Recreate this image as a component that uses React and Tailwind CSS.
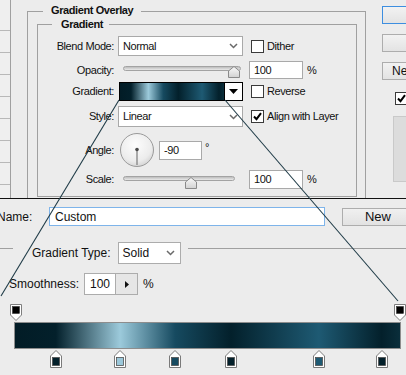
import React from "react";

const GRAD =
  "bg-[linear-gradient(90deg,#021c26_0%,#03202b_10.6%,#9ccadb_27.3%,#164a60_41.6%,#03202b_56.1%,#1e5a73_78.9%,#03202b_95.2%,#0a2e3b_100%)]";

function Check({ checked }) {
  return (
    <div className="w-[13px] h-[13px] shrink-0 border border-[#3a3a3a] bg-white flex items-center justify-center">
      {checked && (
        <svg width="9" height="9" viewBox="0 0 9 9">
          <path d="M1 4.5 L3.5 7.2 L8 1.2" stroke="#000" strokeWidth="2" fill="none" />
        </svg>
      )}
    </div>
  );
}

function Chevron() {
  return (
    <svg width="9" height="6" viewBox="0 0 9 6">
      <path d="M1 1 L4.5 4.5 L8 1" stroke="#6a6a6a" strokeWidth="1.5" fill="none" />
    </svg>
  );
}

function Thumb() {
  return (
    <svg width="12" height="12" viewBox="0 0 12 12">
      <defs>
        <linearGradient id="tg" x1="0" y1="0" x2="0" y2="1">
          <stop offset="0" stopColor="#fafafa" />
          <stop offset="1" stopColor="#d2d2d2" />
        </linearGradient>
      </defs>
      <path d="M6 0.5 L11.5 5 V11.5 H0.5 V5 Z" fill="url(#tg)" stroke="#8a8a8a" />
    </svg>
  );
}

function OpacityStop() {
  return (
    <svg width="12" height="17" viewBox="0 0 12 17">
      <path d="M0.5 0.5 H11.5 V11 L6 16.5 L0.5 11 Z" fill="#fff" stroke="#7e7e7e" />
      <rect x="2.5" y="2.5" width="7" height="7" fill="#000" stroke="#222" strokeWidth="0.5" />
    </svg>
  );
}

function ColorStop({ color }) {
  return (
    <svg width="12" height="18" viewBox="0 0 12 18">
      <path d="M6 0.5 L11.5 6 V17.5 H0.5 V6 Z" fill="#fff" stroke="#7a7a7a" />
      <rect x="2.5" y="7.5" width="7" height="8" fill={color} stroke="#505050" strokeWidth="0.8" />
    </svg>
  );
}

export default function App() {
  const stops = [
    { x: 50, c: "#03202b" },
    { x: 114, c: "#9cc8da" },
    { x: 169, c: "#164a60" },
    { x: 225, c: "#03202b" },
    { x: 313, c: "#1e5a73" },
    { x: 376, c: "#03202b" },
  ];
  return (
    <div className="relative w-[406px] h-[375px] overflow-hidden bg-[#ececec] text-[#111] font-['Liberation_Sans',Arial,sans-serif]">
      {/* Top: Layer Style dialog */}
      <div className="h-[198px] flex overflow-hidden text-[11px] tracking-[-0.4px]">
        <div className="w-[11px] shrink-0 border-r border-[#a0a0a0] bg-[#efefef] flex flex-col">
          <div className="h-[31px] shrink-0 border-b border-[#b8b8b8]" />
          <div className="h-[22px] shrink-0 border-b border-[#b8b8b8]" />
          <div className="h-[22px] shrink-0 border-b border-[#b8b8b8]" />
          <div className="h-[22px] shrink-0 border-b border-[#b8b8b8]" />
          <div className="h-[22px] shrink-0 border-b border-[#b8b8b8]" />
          <div className="h-[22px] shrink-0 border-b border-[#b8b8b8]" />
          <div className="h-[22px] shrink-0 border-b border-[#b8b8b8]" />
          <div className="h-[22px] shrink-0 border-b border-[#b8b8b8]" />
        </div>

        <div className="ml-[16px] mt-[11px] w-[339px] h-[200px] shrink-0 border border-[#a0a0a0] flex flex-col">
          <div className="-mt-[8px] ml-[15px] self-start px-[8px] bg-[#ececec] font-bold leading-[13px]">
            Gradient Overlay
          </div>
          <div className="ml-[9px] mt-[7px] w-[320px] h-[173px] shrink-0 border border-[#a0a0a0] flex flex-col">
            <div className="-mt-[7px] ml-[14px] self-start pl-[9px] pr-[6px] bg-[#ececec] font-bold leading-[13px]">
              Gradient
            </div>

            {/* Blend Mode */}
            <div className="mt-[5px] h-[20px] flex items-center">
              <div className="w-[76px] shrink-0 text-right">Blend Mode:</div>
              <div className="ml-[4px] w-[125px] h-[20px] shrink-0 bg-white border border-[#a9a9a9] flex items-center justify-between pl-[4px] pr-[4px]">
                <span>Normal</span>
                <Chevron />
              </div>
              <div className="ml-[8px]"><Check /></div>
              <span className="ml-[3px]">Dither</span>
            </div>

            {/* Opacity */}
            <div className="mt-[5px] h-[18px] flex items-center">
              <div className="w-[76px] shrink-0 text-right">Opacity:</div>
              <div className="relative ml-[4px] w-[124px] h-[18px] shrink-0">
                <div className="mt-[5px] ml-[5px] w-[118px] h-[5px] rounded-full border border-[#a3a3a3] bg-[linear-gradient(180deg,#bdbdbd,#e9e9e9)]" />
                <div className="absolute left-[110px] top-[5px]"><Thumb /></div>
              </div>
              <div className="ml-[7px] w-[54px] h-[18px] shrink-0 bg-white border border-[#a9a9a9] flex items-center pl-[4px]">100</div>
              <span className="ml-[4px]">%</span>
            </div>

            {/* Gradient */}
            <div className="mt-[3px] h-[19px] flex items-center">
              <div className="w-[76px] shrink-0 text-right">Gradient:</div>
              <div className="ml-[5px] w-[124px] h-[19px] shrink-0 border border-black flex">
                <div className={"w-[104px] h-full " + GRAD} />
                <div className="w-[18px] h-full border-l border-black bg-white flex items-center justify-center">
                  <svg width="9" height="5" viewBox="0 0 9 5"><path d="M0 0 H9 L4.5 5 Z" fill="#000" /></svg>
                </div>
              </div>
              <div className="ml-[8px]"><Check /></div>
              <span className="ml-[3px]">Reverse</span>
            </div>

            {/* Style */}
            <div className="mt-[5px] h-[21px] flex items-center">
              <div className="w-[76px] shrink-0 text-right">Style:</div>
              <div className="ml-[4px] w-[125px] h-[21px] shrink-0 bg-white border border-[#a9a9a9] flex items-center justify-between pl-[4px] pr-[4px]">
                <span>Linear</span>
                <Chevron />
              </div>
              <div className="ml-[8px]"><Check checked /></div>
              <span className="ml-[3px]">Align with Layer</span>
            </div>

            {/* Angle */}
            <div className="mt-[6px] h-[35px] flex items-center">
              <div className="w-[76px] shrink-0 text-right">Angle:</div>
              <div className="ml-[6px] w-[35px] h-[35px] shrink-0">
                <svg width="35" height="35" viewBox="0 0 35 35">
                  <defs>
                    <radialGradient id="dg" cx="45%" cy="35%" r="70%">
                      <stop offset="0" stopColor="#fdfdfd" />
                      <stop offset="0.7" stopColor="#ececec" />
                      <stop offset="1" stopColor="#cfcfcf" />
                    </radialGradient>
                  </defs>
                  <circle cx="17" cy="17" r="16.5" fill="url(#dg)" stroke="#9a9a9a" />
                  <line x1="17" y1="17" x2="17" y2="32" stroke="#8a8a8a" strokeWidth="1.4" />
                  <circle cx="17" cy="16.5" r="1.8" fill="#4a4a4a" />
                </svg>
              </div>
              <div className="ml-[4px] w-[43px] h-[19px] shrink-0 bg-white border border-[#a9a9a9] flex items-center pl-[4px]">-90</div>
              <span className="ml-[3px] self-start mt-[6px]">°</span>
            </div>

            {/* Scale */}
            <div className="mt-[2px] h-[19px] flex items-center">
              <div className="w-[76px] shrink-0 text-right">Scale:</div>
              <div className="relative ml-[4px] w-[124px] h-[19px] shrink-0">
                <div className="mt-[6px] ml-[5px] w-[112px] h-[5px] rounded-full border border-[#a3a3a3] bg-[linear-gradient(180deg,#bdbdbd,#e9e9e9)]" />
                <div className="absolute left-[67px] top-[7px]"><Thumb /></div>
              </div>
              <div className="ml-[7px] w-[54px] h-[19px] shrink-0 bg-white border border-[#a9a9a9] flex items-center pl-[4px]">100</div>
              <span className="ml-[4px]">%</span>
            </div>
          </div>
        </div>

        {/* Right column buttons */}
        <div className="ml-[16px] w-[80px] shrink-0 flex flex-col text-[12px] tracking-normal">
          <div className="mt-[6px] w-[76px] h-[18px] border border-[#3d8ee0] bg-[linear-gradient(180deg,#f2f2f2,#e3e3e3)]" />
          <div className="mt-[10px] w-[76px] h-[18px] border border-[#adadad] bg-[linear-gradient(180deg,#f2f2f2,#e3e3e3)]" />
          <div className="mt-[10px] w-[76px] h-[18px] border border-[#adadad] bg-[linear-gradient(180deg,#f2f2f2,#e3e3e3)] flex items-center pl-[9px] whitespace-nowrap">New Style...</div>
          <div className="mt-[10px] ml-[13px] flex items-center whitespace-nowrap">
            <Check checked />
            <span className="ml-[3px] text-[11px]">Preview</span>
          </div>
          <div className="mt-[9px] ml-[11px] w-[60px] h-[66px] border border-[#c9c9c9] bg-[#dcdcdc]" />
        </div>
      </div>

      <div className="h-[1px] bg-[#111]" />

      {/* Bottom: Gradient Editor */}
      <div className="flex flex-col text-[12px]">
        <div className="mt-[8px] h-[19px] flex items-center">
          <div className="-ml-[3px] w-[52px] shrink-0">Name:</div>
          <div className="w-[276px] h-[19px] shrink-0 bg-white border border-[#7eb4ea] flex items-center pl-[5px]">Custom</div>
          <div className="ml-[17px] w-[72px] h-[18px] shrink-0 border border-[#adadad] bg-[linear-gradient(180deg,#f0f0f0,#e2e2e2)] flex items-center justify-center text-[13px]">New</div>
        </div>

        <div className="mt-[22px] border-t border-[#a0a0a0] flex flex-col">
          <div className="-mt-[7px] ml-[13px] self-start h-[22px] flex items-center pl-[19px] pr-[7px] bg-[#ececec]">
            <span>Gradient Type:</span>
            <div className="ml-[7px] w-[63px] h-[22px] bg-white border border-[#acacac] flex items-center justify-between pl-[4px] pr-[5px]">
              <span>Solid</span>
              <Chevron />
            </div>
          </div>

          <div className="mt-[9px] h-[22px] flex items-center pl-[9px]">
            <div className="w-[75px] shrink-0">Smoothness:</div>
            <div className="w-[32px] h-[22px] shrink-0 bg-white border border-[#acacac] flex items-center pl-[5px]">100</div>
            <div className="-ml-[1px] w-[23px] h-[22px] shrink-0 border border-[#acacac] bg-[#e6e6e6] flex items-center justify-center">
              <svg width="4" height="7" viewBox="0 0 4 7"><path d="M0 0 L4 3.5 L0 7 Z" fill="#111" /></svg>
            </div>
            <span className="ml-[5px]">%</span>
          </div>

          <div className="relative mt-[9px] h-[64px]">
            <div className={"mt-[18px] ml-[14px] w-[387px] h-[27px] border border-[#8d8d8d] " + GRAD} />
            <div className="absolute top-0 left-[10px]"><OpacityStop /></div>
            <div className="absolute top-0 left-[394px]"><OpacityStop /></div>
            {stops.map((s, i) => (
              <div key={i} className="absolute top-[46px]" style={{ left: s.x }}>
                <ColorStop color={s.c} />
              </div>
            ))}
          </div>
        </div>
      </div>

      {/* Zoom callout lines */}
      <svg className="absolute top-0 left-0 pointer-events-none" width="406" height="375" viewBox="0 0 406 375">
        <line x1="119" y1="100" x2="1" y2="296" stroke="#1f3b47" strokeWidth="1.1" />
        <line x1="225" y1="100" x2="398" y2="301" stroke="#1f3b47" strokeWidth="1.1" />
      </svg>
    </div>
  );
}
